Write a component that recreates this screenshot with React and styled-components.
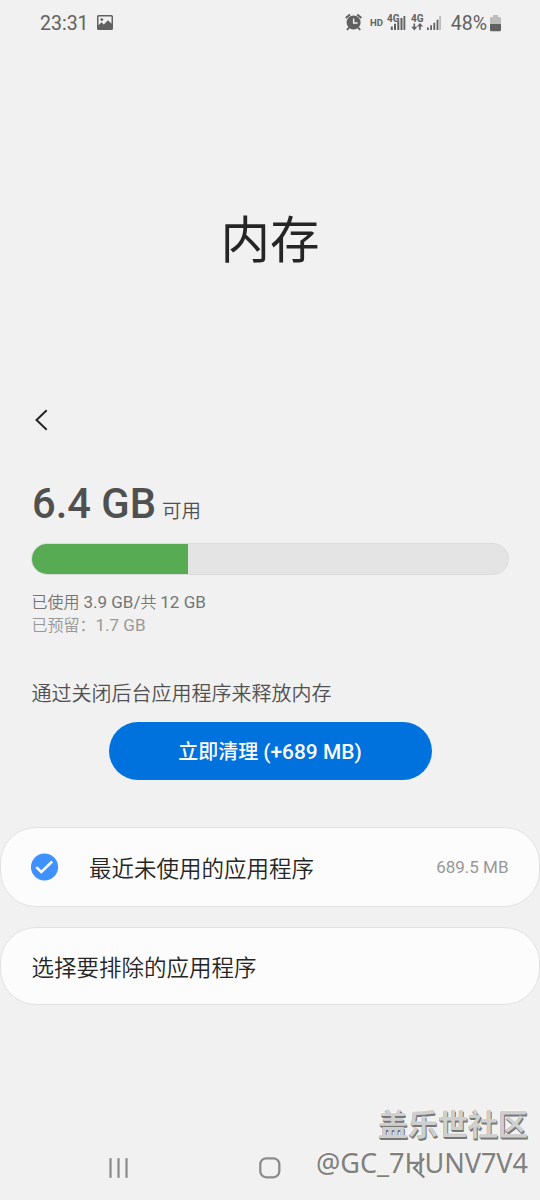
import { createGlobalStyle, styled } from "styled-components";

const memory = { used: 3.9, total: 12 };

export default function MemoryPage() {
  return (
    <>
      <GlobalStyle />
      <SCScreen>
        <SCStatusBar>
          <SCTime>23:31</SCTime>
          <PictureIcon />
          <SCStatusRight>
            <StatusIcons />
            <SCBattery>48%</SCBattery>
            <BatteryIcon />
          </SCStatusRight>
        </SCStatusBar>

        <SCTitle>内存</SCTitle>

        <SCBack aria-label="返回">
          <svg width="14" height="22" viewBox="0 0 14 22">
            <path d="M12.7 1.2L2.5 11l10.2 9.8" fill="none" stroke="#252525" strokeWidth="2" />
          </svg>
        </SCBack>

        <SCSummary>
          <SCAvailable>
            <strong>6.4 GB</strong>
            <span>可用</span>
          </SCAvailable>
          <SCTrack>
            <SCFill style={{ width: `${(memory.used / memory.total) * 100 + 0.3}%` }} />
          </SCTrack>
          <SCDetail>
            已使用 <span>3.9 GB/</span>共 <span>12 GB</span>
          </SCDetail>
          <SCDetail $light>
            已预留：<span>1.7 GB</span>
          </SCDetail>
          <SCHint>通过关闭后台应用程序来释放内存</SCHint>
        </SCSummary>

        <SCButton>
          立即清理 <span>(+689 MB)</span>
        </SCButton>

        <SCCard $height={80}>
          <SCCheck width="28" height="28" viewBox="0 0 28 28">
            <circle cx="13.5" cy="14" r="13.6" fill="#3e91ff" />
            <path d="M5.3 14.1l5 4.8L21.2 8.5" fill="none" stroke="#fcfcfc" strokeWidth="2.5" />
          </SCCheck>
          <SCLabel>最近未使用的应用程序</SCLabel>
          <SCSize>689.5 MB</SCSize>
        </SCCard>
        <SCCard $height={78}>
          <SCLabel>选择要排除的应用程序</SCLabel>
        </SCCard>

        <SCNavBar>
          <svg width="20" height="20" viewBox="0 0 20 20">
            <path d="M2.5 1v18M10.5 1v18M18.5 1v18" stroke="#8b8b8b" strokeWidth="2.2" strokeLinecap="round" />
          </svg>
          <svg width="22" height="22" viewBox="0 0 22 22">
            <rect x="1.3" y="1.3" width="19" height="19" rx="6" fill="none" stroke="#8b8b8b" strokeWidth="2.3" />
          </svg>
          <svg width="14" height="22" viewBox="0 0 14 22">
            <path d="M12.2 1.5L2 11l10.2 9.5" fill="none" stroke="#7c7c7c" strokeWidth="2.2" />
          </svg>
        </SCNavBar>

        <SCWatermark>
          <SCCommunity>盖乐世社区</SCCommunity>
          <SCUser>@GC_7HUNV7V4</SCUser>
        </SCWatermark>
      </SCScreen>
    </>
  );
}

function PictureIcon() {
  return (
    <svg width="16" height="16" viewBox="0 0 16 16">
      <path
        fillRule="evenodd"
        fill="#616161"
        d="M1.5 0h13A1.5 1.5 0 0116 1.5v12a1.5 1.5 0 01-1.5 1.5h-13A1.5 1.5 0 010 13.5v-12A1.5 1.5 0 011.5 0zM1.5 1.5v8.8l3-3.1 2.3 2.2 4.2-4.2 3.5 3.6V1.5z"
      />
      <circle cx="4.8" cy="4.6" r="1.4" fill="#616161" />
    </svg>
  );
}

function StatusIcons() {
  return (
    <svg width="98" height="20" viewBox="0 0 98 20" fill="#616161" fontFamily="Roboto, sans-serif" fontWeight="700">
      <circle cx="8.6" cy="9.5" r="7" />
      <path d="M.8 5l4.2-3.6M16.4 5l-4.2-3.6M4 14.5l-2 2.5M13.2 14.5l2 2.5" stroke="#616161" strokeWidth="2" />
      <path d="M8.6 5.5v4.5h4" fill="none" stroke="#f1f1f1" strokeWidth="1.4" />
      <text x="25" y="12.6" fontSize="9.6">HD</text>
      <text x="42" y="9" fontSize="10">4G</text>
      <path d="M45.8 13.5h2V17h-2zM49 10.8h2V17h-2zM52.3 8.5h2V17h-2zM55.5 5h2V17h-2zM58.5 3h1.8v14h-1.8z" />
      <text x="66" y="9" fontSize="10">4G</text>
      <path d="M69.3 10.5v5M75 17v-5" stroke="#616161" strokeWidth="1.6" />
      <path d="M66.2 13.8h6.2L69.3 17.5zM71.9 13.6h6.2L75 10z" />
      <path d="M82 14.5h1.8V17H82zM85.2 12.2H87V17h-1.8zM88.4 9.8h1.8V17h-1.8zM91.6 6.8h1.8V17h-1.8z" />
      <path d="M94.2 3H96v14h-1.8z" fill="#bdbdbd" />
    </svg>
  );
}

function BatteryIcon() {
  return (
    <svg width="11" height="17" viewBox="0 0 11 17">
      <path d="M3 0h5v2h1.8q1.2 0 1.2 1.2V9H0V3.2Q0 2 1.2 2H3z" fill="#bdbdbd" />
      <path d="M0 9h11v6q0 1.2-1.2 1.2H1.2Q0 16.2 0 15z" fill="#616161" />
    </svg>
  );
}

const GlobalStyle = createGlobalStyle`
  * {
    box-sizing: border-box;
  }
  body {
    margin: 0;
    background: #f1f1f1;
    font-family: Roboto, "Noto Sans CJK SC", sans-serif;
  }
`;

const SCScreen = styled.main`
  position: relative;
  display: flex;
  flex-direction: column;
  width: 540px;
  height: 1200px;
  overflow: hidden;
  color: #252525;
`;

const SCStatusBar = styled.header`
  display: flex;
  align-items: center;
  gap: 8px;
  height: 46px;
  padding: 0 39px 0 40px;
  color: #616161;
  font-size: 19.5px;
  line-height: 24px;
`;

const SCTime = styled.span`
  width: 49px;
  padding-top: 2px;
`;

const SCStatusRight = styled.div`
  display: flex;
  align-items: center;
  margin-left: auto;
`;

const SCBattery = styled.span`
  margin: 0 3px 0 8px;
  padding-top: 2px;
`;

const SCTitle = styled.h1`
  margin: 159px 0 0;
  font-size: 49.5px;
  font-weight: 400;
  line-height: 72px;
  text-align: center;
`;

const SCBack = styled.button`
  display: flex;
  width: 14px;
  height: 22px;
  margin: 132px 0 0 34px;
  padding: 0;
  border: 0;
  background: none;
`;

const SCSummary = styled.section`
  padding: 49px 31px 0;
  font-weight: 350;
`;

const SCAvailable = styled.div`
  display: flex;
  align-items: baseline;
  gap: 6px;
  height: 63px;
  padding-left: 1px;
  color: #505050;
  font-size: 19.5px;
  line-height: 48px;
  strong {
    font-size: 41.7px;
    font-weight: 500;
  }
`;

const SCTrack = styled.div`
  height: 32px;
  overflow: hidden;
  border: 1px solid #dcdcdc;
  border-radius: 16px;
  background: #e4e4e4;
  margin-bottom: 16px;
`;

const SCFill = styled.div`
  height: 100%;
  background: #57ac53;
`;

const SCDetail = styled.p`
  margin: 0;
  padding-left: 0.5px;
  color: ${({ $light }) => ($light ? "#989898" : "#757575")};
  font-size: 16px;
  line-height: 23px;
  span {
    font-size: 17px;
    font-weight: 400;
  }
`;

const SCHint = styled.p`
  margin: 43px 0 0;
  padding-left: 0.5px;
  color: #505050;
  font-size: 20px;
  line-height: 28px;
`;

const SCButton = styled.button`
  flex: none;
  align-self: center;
  width: 323px;
  height: 58px;
  margin: 14px 0 47px;
  padding: 0 0 2px;
  border: 0;
  border-radius: 29px;
  background: #0072de;
  color: #fcfcfc;
  font-family: inherit;
  font-size: 20px;
  font-weight: 500;
  span {
    font-size: 20.9px;
  }
`;

const SCCard = styled.div`
  display: flex;
  flex: none;
  align-items: center;
  height: ${({ $height }) => $height}px;
  margin-bottom: 20px;
  padding: 0 30.5px;
  border: 1px solid #e2e2e2;
  border-radius: 36px;
  background: #fcfcfc;
  font-size: 22.5px;
`;

const SCLabel = styled.span`
  padding-bottom: 1px;
  font-weight: 350;
`;

const SCCheck = styled.svg`
  margin: 0 30.5px 0 -1px;
`;

const SCSize = styled.span`
  margin-left: auto;
  color: #989898;
  font-size: 17px;
`;

const SCNavBar = styled.nav`
  display: flex;
  align-items: center;
  justify-content: space-between;
  height: 64px;
  margin-top: auto;
  padding: 0 114px 0 107.5px;
`;

const SCWatermark = styled.div`
  position: absolute;
  right: 12px;
  bottom: 18px;
  text-align: right;
  white-space: nowrap;
`;

const SCCommunity = styled.div`
  color: #cfcfcf;
  font-size: 30px;
  font-weight: 700;
  line-height: 38px;
  text-shadow: 0 1px 0 #777777, 1px 2px 0 #777777, -1px -1px 0 #faf7f2;
`;

const SCUser = styled.div`
  color: #808080;
  font-family: "Noto Sans", sans-serif;
  font-size: 27px;
  line-height: 38px;
  text-shadow: -1px -1px 0 #faf7f2;
`;
